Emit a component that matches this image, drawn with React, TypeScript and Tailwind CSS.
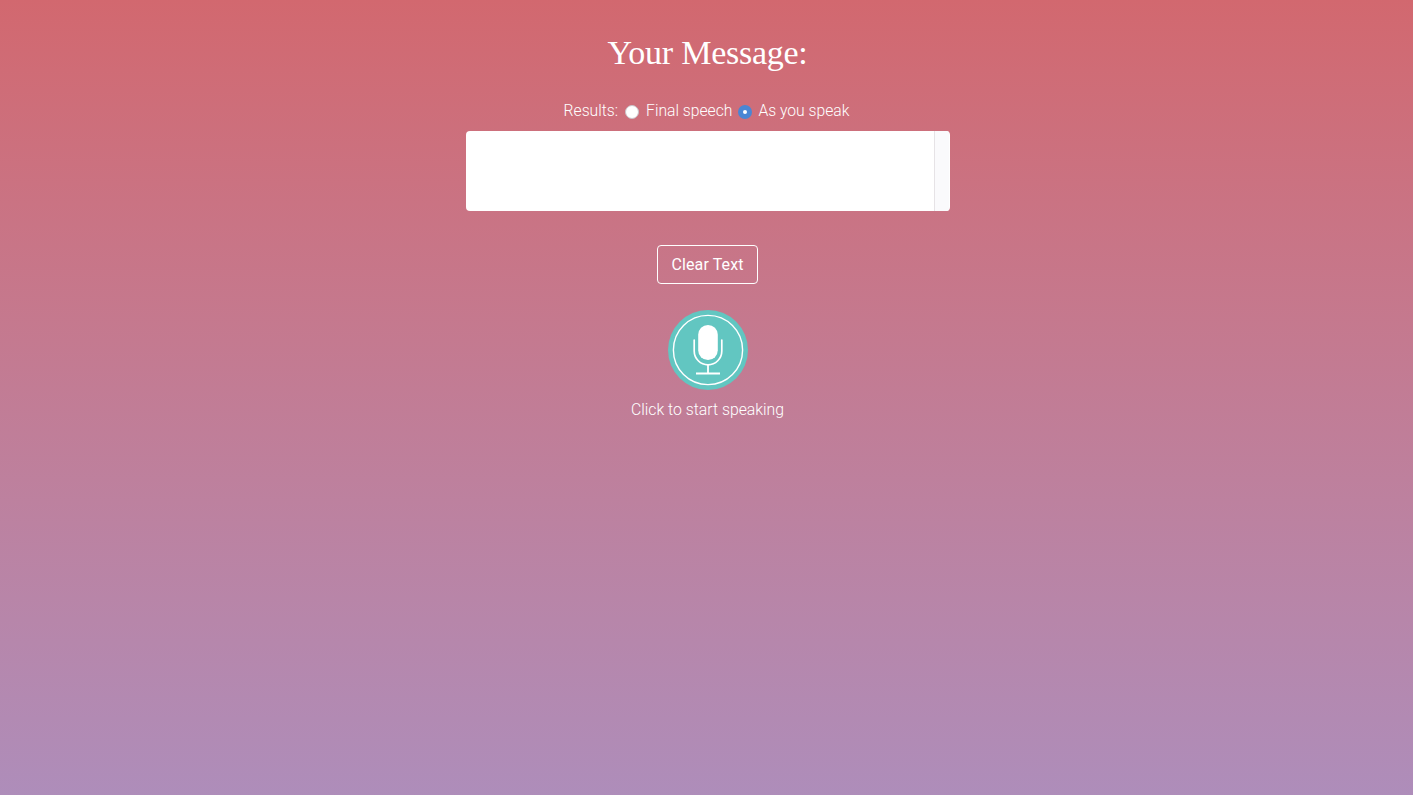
import * as React from "react";

// Round teal button with the ring and mic drawn to the same 80px grid
function MicButton() {
  return (
    <button type="button" aria-label="Start speaking" className="block w-20 h-20 rounded-full">
      <svg width="80" height="80" viewBox="0 0 80 80" fill="none" className="block">
        <circle cx="40" cy="40" r="40" fill="#62c6c1" />
        <circle cx="40" cy="40" r="34.6" stroke="#fff" strokeWidth="1.4" />
        <rect x="30.2" y="15" width="19.6" height="35" rx="9.8" fill="#fff" />
        <path
          d="M26.2 30v11c0 7.6 6.2 13.8 13.8 13.8S53.8 48.6 53.8 41V30"
          stroke="#fff"
          strokeWidth="1.7"
          strokeLinecap="round"
        />
        <path d="M40 54.8v8.2M28 63.5h24" stroke="#fff" strokeWidth="1.8" />
      </svg>
    </button>
  );
}

function Radio({ checked = false }: { checked?: boolean }) {
  return checked ? (
    <span className="inline-flex w-[14px] h-[14px] items-center justify-center rounded-full bg-[#4a86d4]">
      <span className="w-1 h-1 rounded-full bg-white" />
    </span>
  ) : (
    <span className="inline-block w-[14px] h-[14px] rounded-full bg-white border border-[#c9c3c9]" />
  );
}

export default function App() {
  return (
    <main className="min-h-[795px] pl-[2px] flex flex-col items-center bg-gradient-to-b from-[#d2686f] to-[#ae8dba] text-white font-['Roboto',sans-serif] font-light">
      <h1 className="mt-[31px] h-11 text-[34px] leading-[44px] font-normal tracking-[-0.25px] font-['Liberation_Serif',serif]">
        Your Message:
      </h1>
      <div className="mt-[25px] h-[22px] pr-[2px] flex items-center text-[15.7px] leading-[22px]">
        <span>Results:</span>
        <span className="ml-[7px] mt-[1px] flex"><Radio /></span>
        <span className="ml-[7px]">Final speech</span>
        <span className="ml-[6px] mt-[1px] flex"><Radio checked /></span>
        <span className="ml-[6px]">As you speak</span>
      </div>
      <div className="mt-[9px] w-[484px] h-20 flex justify-end rounded-[4px] bg-white overflow-hidden">
        <div className="w-[15px] mr-px bg-[#fafafc] border-l border-[#e6e3e6]" />
      </div>
      <button
        type="button"
        className="mt-[34px] w-[101px] h-[39px] rounded-[4px] border border-white text-[16px] tracking-[0.1px] font-normal"
      >
        Clear Text
      </button>
      <div className="mt-[26px]">
        <MicButton />
      </div>
      <p className="mt-[9px] text-[15.8px] leading-[22px]">Click to start speaking</p>
    </main>
  );
}
